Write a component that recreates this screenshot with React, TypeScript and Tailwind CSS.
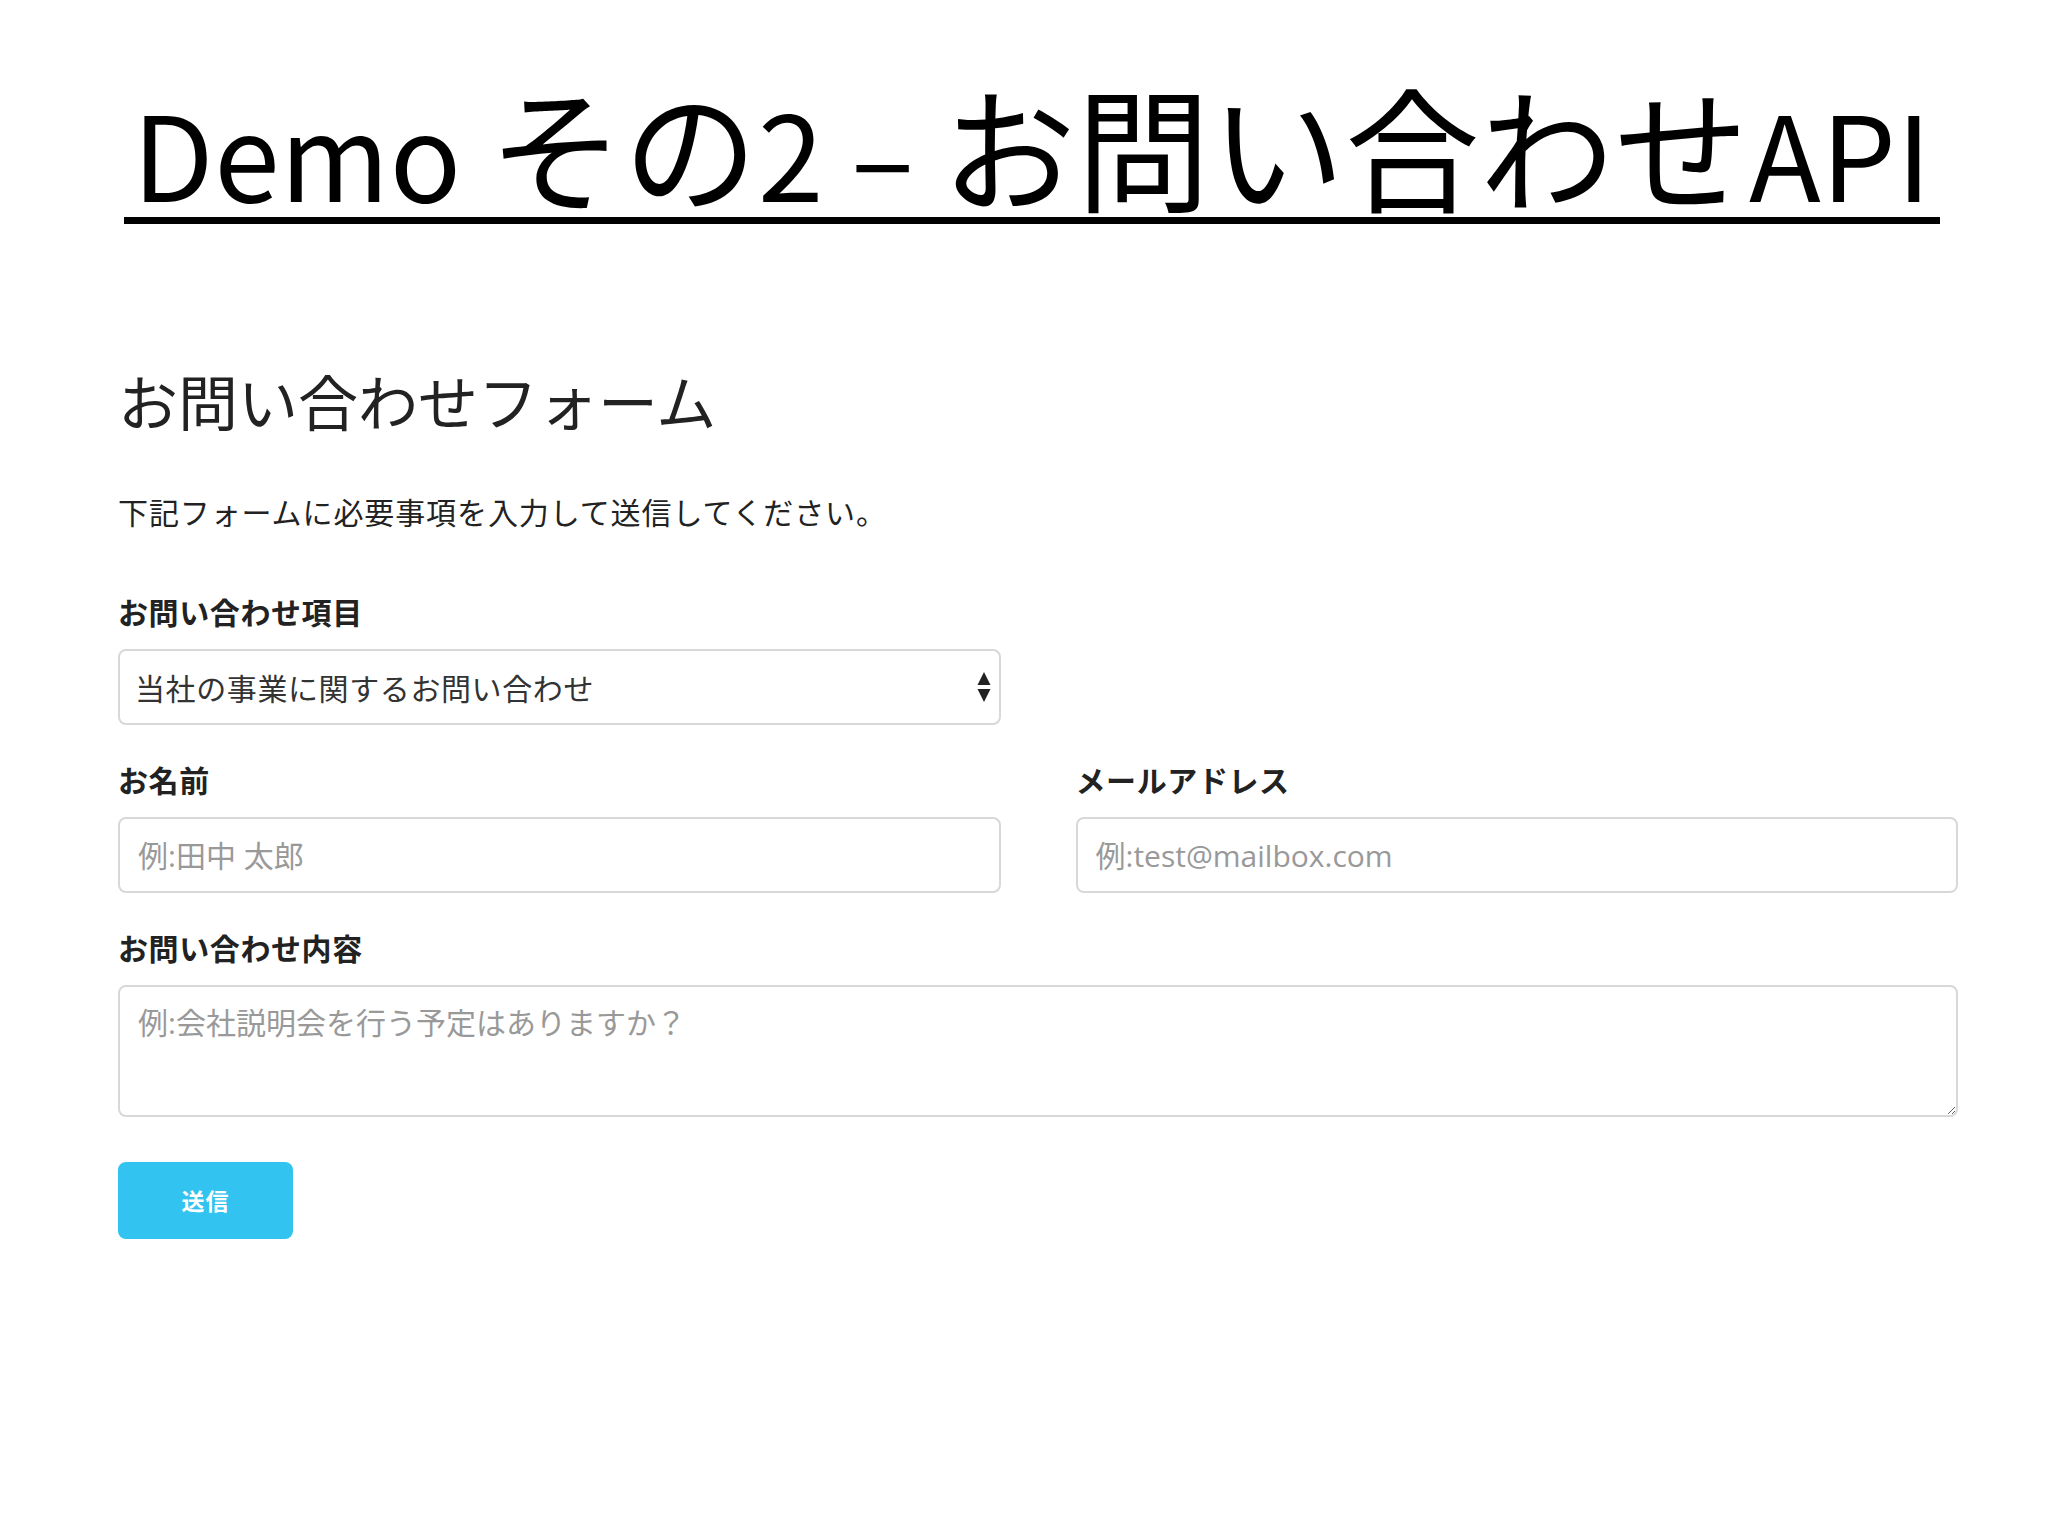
const jp = "font-['Noto_Sans_CJK_JP',sans-serif]"
const inputFont = "font-['Open_Sans','Noto_Sans_CJK_JP',sans-serif]"

const Label = ({ children }: { children: string }) => (
  <label className="block text-[30px] leading-[48px] font-bold tracking-[0.02em] text-[#222] mb-[14px]">{children}</label>
)

export default function App() {
  return (
    <div className={`min-h-screen w-full bg-white ${jp} text-[#222]`}>
      <div className="flex justify-center pt-[77px] pl-[16px]">
        <h1 className="inline-block px-[8px] pb-[6px] border-b-[7px] border-black text-[134px] leading-none font-normal text-black whitespace-nowrap tracking-[0.004em]">
          <span className="text-[118px]">Demo </span>
          その
          <span className="text-[118px]">2 – </span>
          お問い合わせ
          <span className="text-[118px]">API</span>
        </h1>
      </div>

      <div className="px-[118px] pt-[137px] w-[2076px]">
        <h2 className="text-[60px] leading-[78px] font-normal text-[#222]">お問い合わせフォーム</h2>
        <p className="mt-[48px] text-[30px] leading-[48px] tracking-[0.03em]">下記フォームに必要事項を入力して送信してください。</p>

        <form className="mt-[52px]" onSubmit={(e) => e.preventDefault()}>
          <div className="grid grid-cols-2 gap-x-[75px]">
            <div>
              <Label>お問い合わせ項目</Label>
              <div className="relative">
                <select className="block w-full h-[76px] appearance-none rounded-[8px] border-2 border-[#d8d8d8] bg-white pl-[15px] pr-[40px] text-[30px] tracking-[0.02em] text-[#333] outline-none">
                  <option>当社の事業に関するお問い合わせ</option>
                  <option>採用に関するお問い合わせ</option>
                  <option>その他</option>
                </select>
                <svg className="pointer-events-none absolute right-[10px] top-[23px]" width="14" height="30" viewBox="0 0 14 30">
                  <path d="M7 0 L13.5 13 L0.5 13 Z" fill="#222" />
                  <path d="M0.5 17 L13.5 17 L7 30 Z" fill="#222" />
                </svg>
              </div>
            </div>
            <div />
          </div>

          <div className="grid grid-cols-2 gap-x-[75px] mt-[30px]">
            <div>
              <Label>お名前</Label>
              <input
                type="text"
                placeholder="例:田中 太郎"
                className={`block w-full h-[76px] rounded-[8px] border-2 border-[#d8d8d8] bg-white px-[18px] text-[30px] ${inputFont} placeholder:text-[#999] outline-none`}
              />
            </div>
            <div>
              <Label>メールアドレス</Label>
              <input
                type="email"
                placeholder="例:test@mailbox.com"
                className={`block w-full h-[76px] rounded-[8px] border-2 border-[#d8d8d8] bg-white px-[18px] text-[30px] ${inputFont} placeholder:text-[#999] outline-none`}
              />
            </div>
          </div>

          <div className="mt-[30px]">
            <Label>お問い合わせ内容</Label>
            <textarea
              placeholder="例:会社説明会を行う予定はありますか？"
              className={`block w-full h-[132px] rounded-[8px] border-2 border-[#d8d8d8] bg-white px-[18px] pt-[12px] text-[30px] leading-[48px] ${inputFont} placeholder:text-[#999] outline-none`}
            />
          </div>

          <button
            type="submit"
            className="mt-[45px] w-[175px] h-[77px] rounded-[8px] bg-[#33c3f0] text-white text-[23px] font-bold tracking-[1px]"
          >
            送信
          </button>
        </form>
      </div>
    </div>
  )
}
